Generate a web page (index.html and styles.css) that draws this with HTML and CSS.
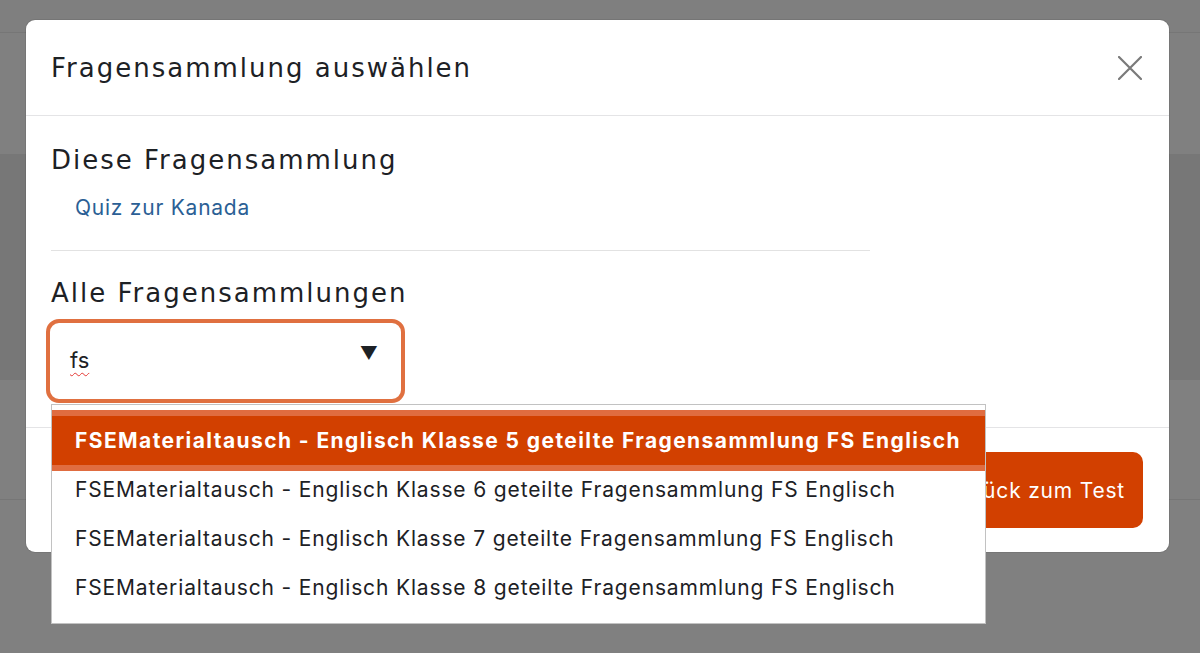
FILE: index.html
```html
<!DOCTYPE html>
<html lang="de">
<head>
<meta charset="utf-8">
<title>Fragensammlung auswählen</title>
<link rel="stylesheet" href="styles.css">
</head>
<body>
<div class="backdrop">
  <div class="bg-top"></div>
  <div class="bg-mid"></div>
  <div class="bg-band"></div>
  <div class="bg-low"></div>
  <div class="bg-bottom"></div>
</div>
<div class="overlay">
  <div class="modal">
    <div class="modal-header">
      <h2 class="modal-title">Fragensammlung auswählen</h2>
      <button class="close" aria-label="Schließen">
        <svg width="24" height="24" viewBox="0 0 24 24"><path d="M1 1L23 23M23 1L1 23" stroke="#7a7a7a" stroke-width="2.2" stroke-linecap="round" fill="none"/></svg>
      </button>
    </div>
    <div class="modal-body">
      <h3 class="section-title">Diese Fragensammlung</h3>
      <a class="bank-link" href="#">Quiz zur Kanada</a>
      <hr class="divider">
      <h3 class="section-title">Alle Fragensammlungen</h3>
      <div class="combo">
        <div class="combo-field">
          <span class="combo-value">fs</span>
          <span class="combo-arrow">▼</span>
        </div>
        <ul class="listbox">
          <li class="option active">FSEMaterialtausch - Englisch Klasse 5 geteilte Fragensammlung FS Englisch</li>
          <li class="option">FSEMaterialtausch - Englisch Klasse 6 geteilte Fragensammlung FS Englisch</li>
          <li class="option">FSEMaterialtausch - Englisch Klasse 7 geteilte Fragensammlung FS Englisch</li>
          <li class="option">FSEMaterialtausch - Englisch Klasse 8 geteilte Fragensammlung FS Englisch</li>
        </ul>
      </div>
    </div>
    <div class="modal-footer">
      <button class="btn-primary">Zurück zum Test</button>
    </div>
  </div>
</div>
</body>
</html>
```

FILE: styles.css
```css
* { box-sizing: border-box; }
html, body { margin: 0; padding: 0; }
body {
  width: 1200px;
  height: 653px;
  overflow: hidden;
  background: #808080;
  font-family: "Inter", "Liberation Sans", sans-serif;
  position: relative;
}
.backdrop {
  display: flex;
  flex-direction: column;
  height: 653px;
}
.bg-top { height: 33px; background: #7f7f7f; border-bottom: 1px solid #767676; }
.bg-mid { height: 121px; background: #808080; }
.bg-band { height: 226px; background: #777777; }
.bg-low { height: 120px; background: #808080; border-bottom: 1px solid #767676; }
.bg-bottom { flex: 1; background: #808080; }

.overlay {
  position: absolute;
  inset: 0;
  padding: 20px 31px 0 26px;
}
.modal {
  width: 1143px;
  height: 532px;
  background: #fff;
  border-radius: 9px;
  box-shadow: 0 0 0 1px rgba(0,0,0,0.08);
  display: flex;
  flex-direction: column;
}
.modal-header {
  height: 96px;
  border-bottom: 1px solid #e4e4e6;
  display: flex;
  align-items: center;
  justify-content: space-between;
  padding: 0 27px 0 25px;
}
.modal-title {
  margin: 0;
  font-family: "DejaVu Sans", sans-serif;
  font-weight: 400;
  font-size: 26px;
  letter-spacing: 2px;
  color: #1d2125;
}
.close {
  border: 0;
  background: none;
  padding: 0;
  width: 24px;
  height: 24px;
  display: flex;
}
.modal-body {
  height: 312px;
  padding: 27px 25px 0 25px;
  border-bottom: 1px solid #e4e4e6;
  display: flex;
  flex-direction: column;
  align-items: flex-start;
}
.section-title {
  margin: 0;
  font-family: "DejaVu Sans", sans-serif;
  font-weight: 400;
  font-size: 26px;
  letter-spacing: 2px;
  line-height: 34px;
  color: #1d2125;
}
.section-title + .combo { margin-top: 9px; }
.bank-link {
  margin: 19px 0 0 24px;
  font-size: 21px;
  letter-spacing: 0.76px;
  line-height: 24px;
  color: #2b5f95;
  text-decoration: none;
}
.divider {
  width: 819px;
  margin: 30px 0 25px 0;
  border: 0;
  border-top: 1px solid #e2e2e2;
}
.combo {
  position: relative;
  margin-left: -5px;
}
.combo-field {
  width: 359px;
  height: 84px;
  border: 4px solid #e07040;
  border-radius: 13px;
  position: relative;
  padding: 22px 20px 0 20px;
  display: flex;
  justify-content: space-between;
  align-items: flex-start;
}
.combo-value {
  font-size: 22px;
  line-height: 28px;
  margin-top: 1px;
  color: #1d2125;
  text-decoration: underline wavy #e53935;
  text-decoration-thickness: 1px;
  text-underline-offset: 4px;
}
.combo-arrow {
  font-size: 18px;
  line-height: 18px;
  color: #1d2125;
  margin-right: 3px;
}
.listbox {
  position: absolute;
  top: 85px;
  left: 5px;
  width: 935px;
  margin: 0;
  padding: 11px 0;
  list-style: none;
  background: #fff;
  border: 1px solid #c2c2c2;
  z-index: 5;
}
.option {
  height: 49px;
  line-height: 49px;
  padding-left: 23px;
  font-size: 21px;
  letter-spacing: 0.85px;
  color: #1d2125;
  white-space: nowrap;
}
.option.active {
  background: #d24000;
  color: #fff;
  font-weight: 700;
  letter-spacing: 1.41px;
  box-shadow: 0 -6px 0 #e06c40, 0 6px 0 #e06c40;
  position: relative;
}
.modal-footer {
  flex: 1;
  display: flex;
  justify-content: flex-end;
  align-items: flex-start;
  padding: 24px 26px 0 0;
}
.btn-primary {
  height: 76px;
  padding: 0 18px 0 19px;
  background: #d24000;
  color: #fff;
  border: 0;
  border-radius: 10px;
  font-family: "Inter", sans-serif;
  font-size: 21px;
  letter-spacing: 0.8px;
}
```
